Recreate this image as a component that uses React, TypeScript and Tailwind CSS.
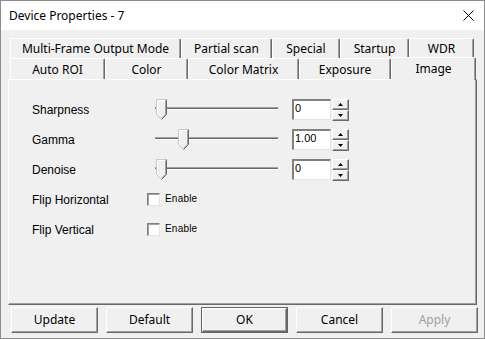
// ** Device Properties dialog (classic Win32 property sheet look)

const face = 'bg-[#f0f0f0]';

type TabProps = { label: string; w: string; selected?: boolean; top?: boolean };

const Tab = ({label, w, selected = false, top = false}: TabProps) => {
    if (selected) {
        return (
            <div
                className={`${w} relative z-10 -mt-[1px] h-[23px] ${face} border-l border-t border-white border-r border-r-[#696969] shadow-[inset_-1px_0_0_#a0a0a0] rounded-t-[2px] flex items-start justify-center pt-[2px] text-[12px] text-black`}>
                {label}
            </div>
        );
    }
    return (
        <div
            className={`${w} ${top ? 'h-[20px]' : 'h-[21px]'} ${face} border-l border-t border-white border-r border-r-[#696969] shadow-[inset_-1px_0_0_#a0a0a0] rounded-t-[2px] flex items-center justify-center pt-[1px] text-[12px] text-black`}>
            {label}
        </div>
    );
};

const Thumb = () => (
    <svg width="11" height="21" viewBox="0 0 11 21">
        <path d="M0.5 0.5 H10.5 V15.5 L5.5 20.5 L0.5 15.5 Z" fill="#f0f0f0"/>
        <path d="M0.5 15.5 V0.5 H10" stroke="#c8c8c8" fill="none"/>
        <path d="M1.5 15.5 V1.5 H9.5" stroke="#ffffff" fill="none"/>
        <path d="M10.5 0.5 V15.5 L5.5 20.5" stroke="#696969" fill="none"/>
        <path d="M9.5 1.5 V15.2 L5.5 19.2" stroke="#a0a0a0" fill="none"/>
        <path d="M0.5 15.5 L5 20" stroke="#c8c8c8" fill="none"/>
    </svg>
);

const Slider = ({thumb}: { thumb: string }) => (
    <div className="relative w-[123px] h-[21px]">
        <div className="absolute left-0 right-0 top-[8px] h-[3px] border-t border-[#a0a0a0] bg-[#696969] border-b border-b-white"/>
        <div className={`absolute top-0 ${thumb}`}>
            <Thumb/>
        </div>
    </div>
);

const SpinBtn = ({up}: { up?: boolean }) => (
    <div
        className={`h-[11px] ${face} border-l border-t border-white border-r border-b border-r-[#696969] border-b-[#696969] shadow-[inset_-1px_-1px_0_#a0a0a0] flex items-center justify-center`}>
        <svg width="5" height="3" viewBox="0 0 5 3">
            {up ? <path d="M2.5 0 L5 3 H0 Z" fill="#000"/> : <path d="M0 0 H5 L2.5 3 Z" fill="#000"/>}
        </svg>
    </div>
);

const Spin = ({value}: { value: string }) => (
    <div className="flex items-start gap-[1px]">
        <div
            className="w-[39px] h-[21px] bg-white border-l-2 border-t-2 border-[#808080] border-r border-b border-r-[#e3e3e3] border-b-[#e3e3e3] font-['Liberation_Sans',sans-serif] text-[11px] leading-[13px] pl-[1px] pt-[1px]">
            {value}
        </div>
        <div className="w-[17px] flex flex-col">
            <SpinBtn up/>
            <SpinBtn/>
        </div>
    </div>
);

const SliderRow = ({label, value, thumb}: { label: string; value: string; thumb: string }) => (
    <div className="h-[21px] flex items-center">
        <div className="w-[123px] pt-[1px]">{label}</div>
        <Slider thumb={thumb}/>
        <div className="ml-[14px]">
            <Spin value={value}/>
        </div>
    </div>
);

const CheckRow = ({label}: { label: string }) => (
    <div className="h-[21px] flex items-center">
        <div className="w-[115px] pt-[1px]">{label}</div>
        <div className="w-[13px] h-[13px] bg-white border-l border-t border-[#808080] border-r border-b border-r-[#e3e3e3] border-b-[#e3e3e3] shadow-[inset_1px_1px_0_#a0a0a0]"/>
        <span className="ml-[5px] -mt-[2px] text-[10px] tracking-[0.2px]">Enable</span>
    </div>
);

const Btn = ({label, primary, disabled}: { label: string; primary?: boolean; disabled?: boolean }) => (
    <div className={`w-[87px] h-[26px] ${primary ? 'border border-[#646464]' : ''}`}>
        <div
            className={`h-full ${face} border-l border-t border-white border-r border-b border-r-[#696969] border-b-[#696969] shadow-[inset_-1px_-1px_0_#a0a0a0] flex items-center justify-center text-[12px] ${disabled ? 'text-[#a0a0a0]' : 'text-black'}`}>
            {label}
        </div>
    </div>
);

const App = () => {
    return (
        <div
            className={`w-[485px] h-[339px] border border-[#8c8c8c] ${face} flex flex-col font-['Noto_Sans','Open_Sans',sans-serif] text-black overflow-hidden`}>
            {/* title bar */}
            <div className="h-[29px] bg-white flex items-center justify-between pl-[8px] pr-[10px]">
                <span className="text-[12px]">Device Properties - 7</span>
                <svg width="11" height="11" viewBox="0 0 11 11">
                    <path d="M0.5 0.5 L10.5 10.5 M10.5 0.5 L0.5 10.5" stroke="#000" strokeWidth="1"/>
                </svg>
            </div>

            {/* tabs */}
            <div className="mt-[8px] ml-[9px] flex">
                <Tab label="Multi-Frame Output Mode" w="w-[171px]" top/>
                <Tab label="Partial scan" w="w-[91px]" top/>
                <Tab label="Special" w="w-[68px]" top/>
                <Tab label="Startup" w="w-[69px]" top/>
                <Tab label="WDR" w="w-[65px]" top/>
            </div>
            <div className="ml-[9px] flex h-[21px] items-start">
                <Tab label="Auto ROI" w="w-[95px]"/>
                <Tab label="Color" w="w-[83px]"/>
                <Tab label="Color Matrix" w="w-[111px]"/>
                <Tab label="Exposure" w="w-[92px]"/>
                <Tab label="Image" w="w-[85px]" selected/>
            </div>

            {/* page */}
            <div
                className="ml-[7px] w-[469px] h-[226px] border-l border-t border-white border-r border-b border-r-[#696969] border-b-[#696969] shadow-[inset_-1px_-1px_0_#a0a0a0] pl-[23px] pt-[19px] font-['Liberation_Sans',sans-serif] text-[12px] flex flex-col gap-[9px]">
                <SliderRow label="Sharpness" value="0" thumb="left-[1px]"/>
                <SliderRow label="Gamma" value="1.00" thumb="left-[23px]"/>
                <SliderRow label="Denoise" value="0" thumb="left-[1px]"/>
                <CheckRow label="Flip Horizontal"/>
                <CheckRow label="Flip Vertical"/>
            </div>

            {/* buttons */}
            <div className="mt-[2px] ml-[10px] flex gap-[8px]">
                <Btn label="Update"/>
                <Btn label="Default"/>
                <Btn label="OK" primary/>
                <Btn label="Cancel"/>
                <Btn label="Apply" disabled/>
            </div>
        </div>
    );
};

export default App;
